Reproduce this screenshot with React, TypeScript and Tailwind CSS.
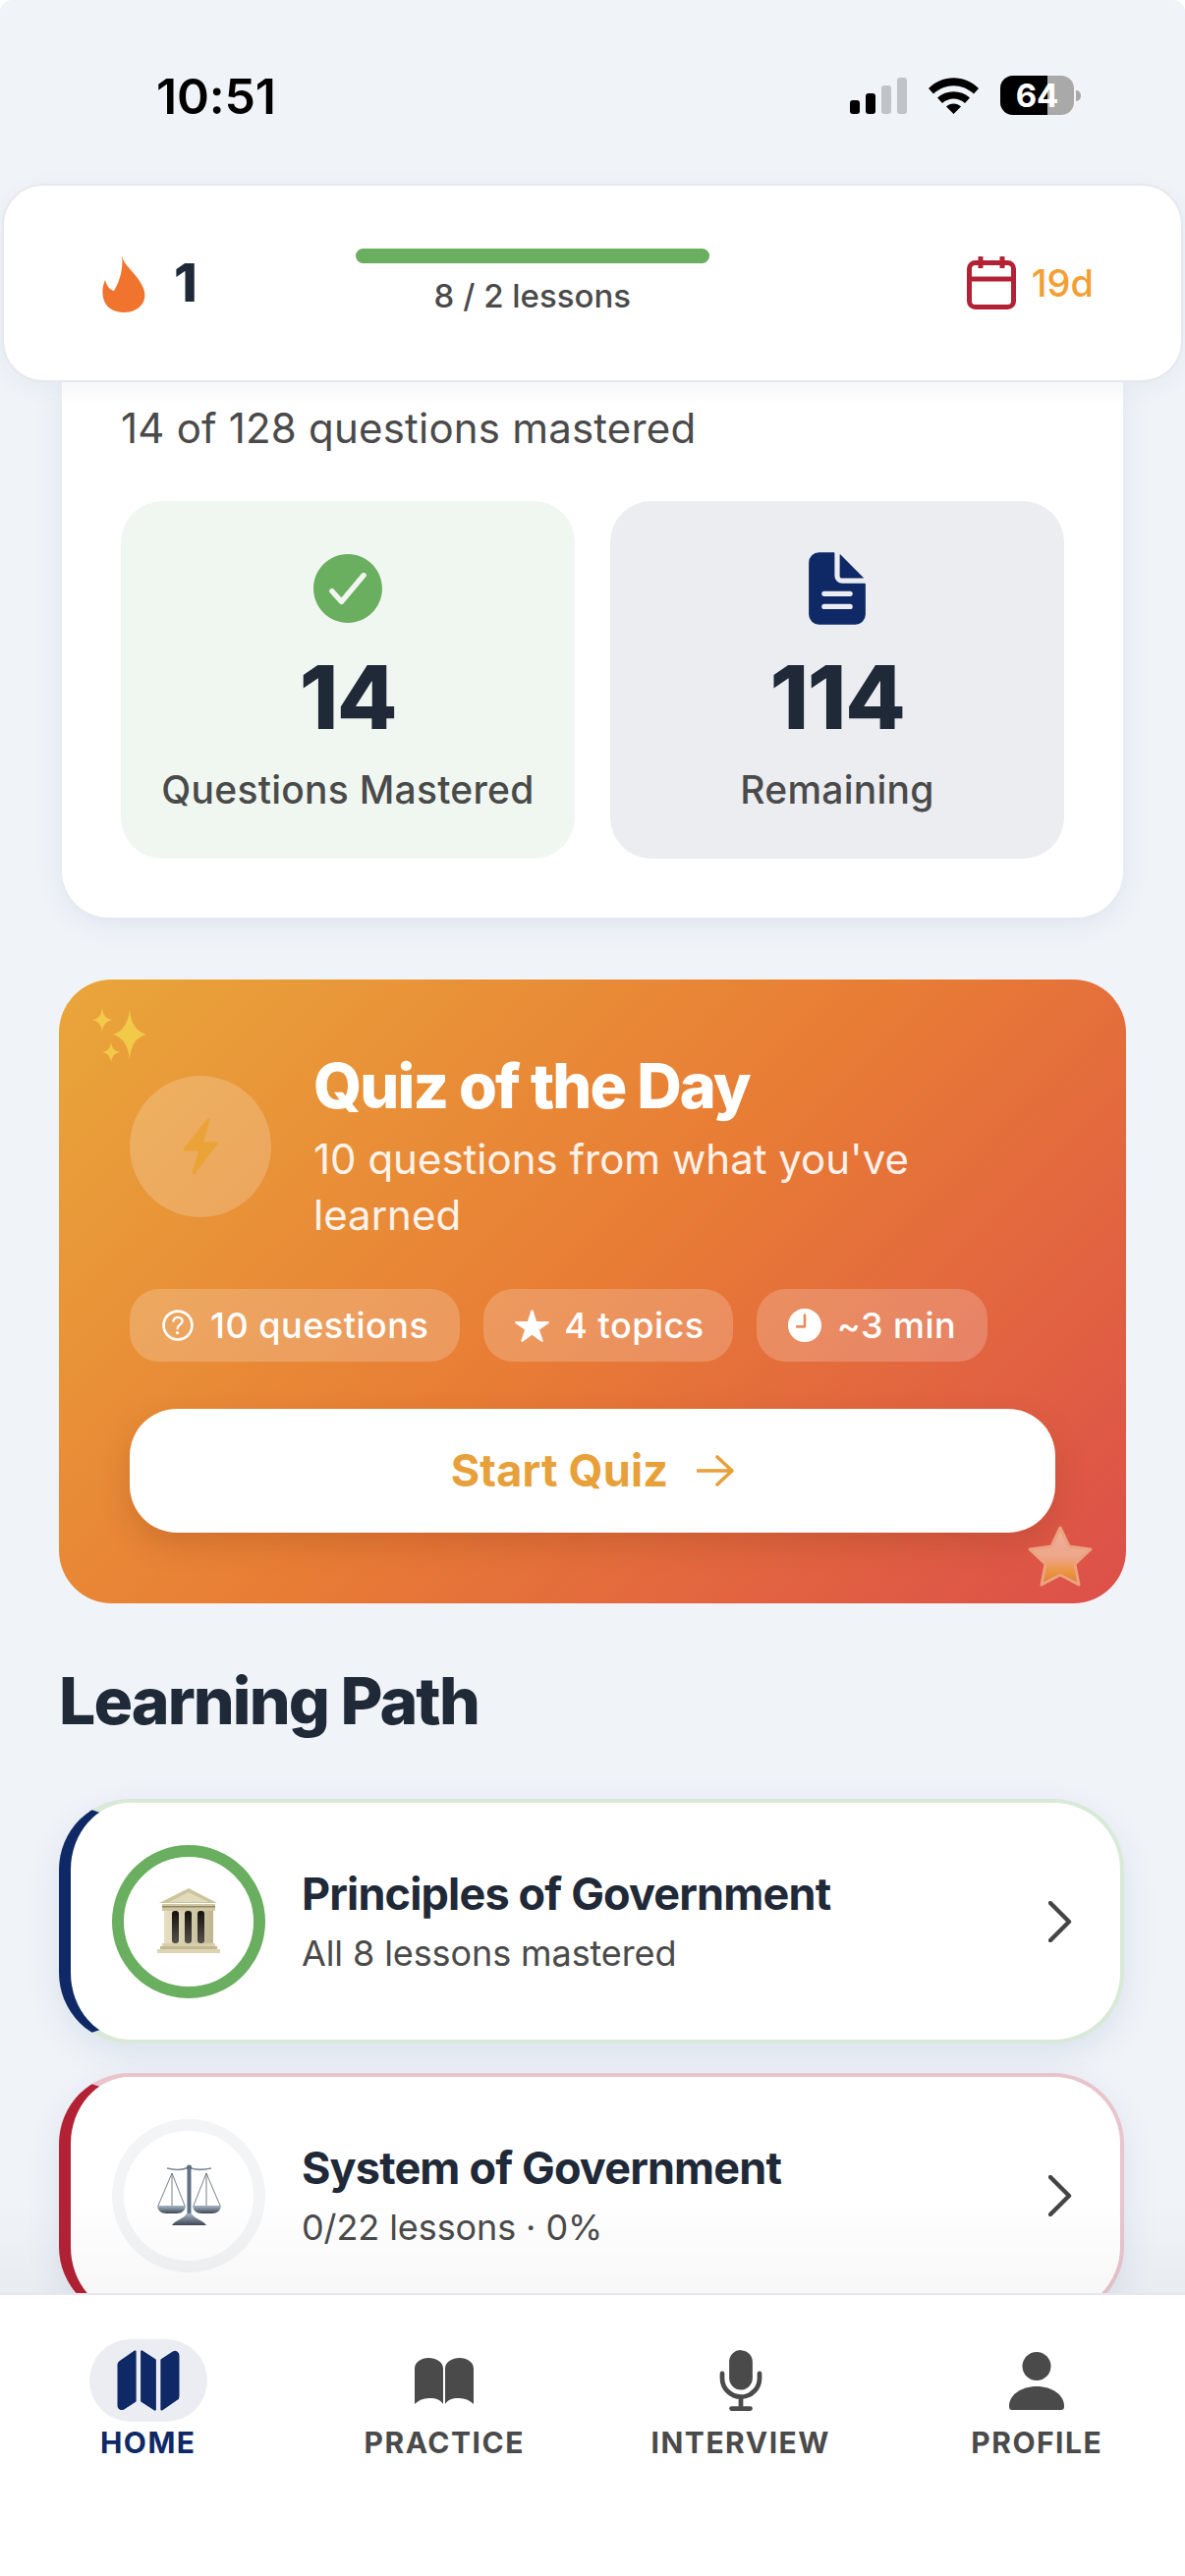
import React from "react";
import { IoCheckmarkCircle, IoDocumentText, IoHelpCircleOutline, IoStar, IoTime, IoMap, IoMic } from "react-icons/io5";

function StatusBar() {
  return (
    <div className="relative flex h-[187px] shrink-0 items-start justify-between pl-[159px] pr-[106px] pt-[68px]">
      <span className="text-[50px] font-semibold leading-[60px] tracking-[-0.2px] text-black">10:51</span>
      <div className="flex items-center pt-[9px]">
        <div className="flex h-[37px] items-end gap-[6px]">
          <div className="h-[14px] w-[10px] rounded-[3px] bg-black" />
          <div className="h-[21px] w-[10px] rounded-[3px] bg-black" />
          <div className="h-[29px] w-[10px] rounded-[3px] bg-[#c0c4c8]" />
          <div className="h-[37px] w-[10px] rounded-[3px] bg-[#c0c4c8]" />
        </div>
        <svg className="ml-[22px]" width="51" height="37" viewBox="0 0 51 37">
          <path d="M0 11 C14 -3.5 37 -3.5 51 11 L46 16.5 C34 5.5 17 5.5 5 16.5 Z" fill="#000" />
          <path d="M9 20.5 C18 12 33 12 42 20.5 L37 26 C30.5 20 20.5 20 14 26 Z" fill="#000" />
          <path d="M18 29.5 C22 25.5 29 25.5 33 29.5 L25.5 37 Z" fill="#000" />
        </svg>
        <div className="relative ml-[22px] flex h-[40px] w-[75px] items-center justify-center overflow-hidden rounded-[13px] bg-[#a9a9a9]">
          <div className="absolute inset-y-0 left-0 w-[48px] bg-black" />
          <span className="relative text-[33px] font-bold leading-[38px] text-white">64</span>
        </div>
        <div className="ml-[2px] h-[11px] w-[5px] rounded-r-full bg-[#a9a9a9]" />
      </div>
    </div>
  );
}

function TopCard() {
  return (
    <div className="relative z-10 mx-[2px] flex h-[202px] shrink-0 items-center rounded-[42px] border-2 border-[#e6e8ee] bg-white pl-[100px] shadow-[0_6px_24px_rgba(15,41,102,0.05)]">
      <svg className="mt-[2px]" width="44" height="58" viewBox="0 0 44 58">
        <path d="M20 0 C22 10 32 16 38 26 C44 35 45 42 41 49 C37 55 30 58 22 58 C12 58 3 53 1 43 C0 37 0 32 3 25 C5 32 8 35 12 36 C17 28 22 14 20 0 Z" fill="#f0742e" />
      </svg>
      <span className="ml-[29px] text-[54px] font-extrabold leading-[60px] text-[#1f2937]">1</span>
      <div className="ml-[161px] flex w-[360px] flex-col items-center">
        <div className="h-[15px] w-full rounded-full bg-[#6aae5f]" />
        <span className="mt-[11px] text-[33px] font-medium leading-[44px] text-[#4a4a4a]">8 / 2 lessons</span>
      </div>
      <svg className="ml-[262px]" width="50" height="54" viewBox="0 0 50 54">
        <rect x="2.5" y="6.5" width="45" height="45" rx="6" fill="none" stroke="#b22234" strokeWidth="5" />
        <path d="M2.5 23 H47.5 M14 0 V12 M36 0 V12" fill="none" stroke="#b22234" strokeWidth="5" />
      </svg>
      <span className="ml-[16px] text-[38px] font-medium leading-[44px] text-[#f2a033]">19d</span>
    </div>
  );
}

function Tile({ icon, value, label, bg }: { icon: React.ReactNode; value: string; label: string; bg: string }) {
  return (
    <div className={`flex h-[364px] flex-col items-center rounded-[42px] pt-[47px] ${bg}`}>
      <div className="flex h-[84px] items-center justify-center">{icon}</div>
      <div className="mt-[19px] text-[90px] font-extrabold leading-[100px] tracking-[-1.5px] text-[#1f2937]">{value}</div>
      <div className="mt-[19px] text-[39px] font-medium leading-[50px] tracking-[0.25px] text-[#4a4a4a]">{label}</div>
    </div>
  );
}

function ProgressCard() {
  return (
    <div className="mx-[3px] rounded-b-[48px] bg-white px-[60px] pb-[60px] pt-[17px] shadow-[0_6px_30px_rgba(15,41,102,0.08)]">
      <div className="text-[42px] font-normal leading-[60px] tracking-[0.2px] text-[#4a4a4a]">14 of 128 questions mastered</div>
      <div className="mt-[44px] grid grid-cols-2 gap-[36px]">
        <Tile bg="bg-[#f0f7f0]" value="14" label="Questions Mastered" icon={<IoCheckmarkCircle className="text-[#6aae5f]" style={{ width: 86, height: 86 }} />} />
        <Tile bg="bg-[#ebedf1]" value="114" label="Remaining" icon={<IoDocumentText className="text-[#0f2966]" style={{ width: 84, height: 84 }} />} />
      </div>
    </div>
  );
}

function Chip({ icon, text, tight }: { icon: React.ReactNode; text: string; tight?: boolean }) {
  return (
    <div className={`flex h-[74px] items-center gap-[12px] rounded-[30px] bg-white/20 pl-[28px] ${tight ? "pr-[29px]" : "pr-[32px]"}`}>
      <div className="flex h-[42px] w-[42px] items-center justify-center">{icon}</div>
      <span className="text-[36px] font-medium leading-[44px] tracking-[0.5px] text-white">{text}</span>
    </div>
  );
}

function QuizCard() {
  return (
    <div className="relative mt-[63px] rounded-[54px] bg-[linear-gradient(135deg,#e9a63a_0%,#e87c35_50%,#dc4f4a_100%)] p-[72px]">
      <svg className="absolute left-[30px] top-[20px]" width="80" height="70" viewBox="0 0 80 70">
        <g fill="#f3c94a">
          <path d="M42 10 Q43 31 59 36 Q43 40 42 62 Q40 40 25 36 Q40 31 42 10 Z" />
          <path d="M14 9 Q15 20 24 21 Q15 23 14 33 Q13 23 4 21 Q13 20 14 9 Z" />
          <path d="M23 44 Q24 53 32 54 Q24 55 23 64 Q22 55 14 54 Q22 53 23 44 Z" />
        </g>
      </svg>
      <div className="flex items-center gap-[43px]">
        <div className="flex h-[144px] w-[144px] shrink-0 items-center justify-center rounded-full bg-white/20">
          <svg width="36" height="58" viewBox="0 0 36 58">
            <path d="M26 2 L2 32 H18 L11 56 L34 26 H19 Z" fill="#eba338" stroke="#eba338" strokeWidth="3" strokeLinejoin="round" />
          </svg>
        </div>
        <div className="min-w-0">
          <div className="text-[63px] font-extrabold leading-[72px] tracking-[-1.9px] text-white">Quiz of the Day</div>
          <div className="mt-[10px] text-[42px] font-normal leading-[57px] text-white/90">10 questions from what you've<br />learned</div>
        </div>
      </div>
      <div className="mt-[47px] flex gap-[24px]">
        <Chip text="10 questions" icon={<IoHelpCircleOutline className="text-white" style={{ width: 42, height: 42 }} />} />
        <Chip tight text="4 topics" icon={<IoStar className="text-white" style={{ width: 37, height: 37 }} />} />
        <Chip text="~3 min" icon={<IoTime className="-scale-x-100 text-white" style={{ width: 42, height: 42 }} />} />
      </div>
      <div className="mt-[48px] flex h-[126px] items-center justify-center gap-[29px] rounded-[48px] bg-white shadow-[0_12px_30px_rgba(120,50,20,0.22)]">
        <span className="text-[45px] font-bold leading-[56px] tracking-[0.2px] text-[#e8a03a]">Start Quiz</span>
        <svg width="38" height="32" viewBox="0 0 38 32">
          <path d="M1 16 H36 M21 2 L36 16 L21 30" fill="none" stroke="#e8a03a" strokeWidth="3.6" strokeLinecap="round" strokeLinejoin="round" />
        </svg>
      </div>
      <svg className="absolute bottom-[16px] right-[33px]" width="68" height="64" viewBox="0 0 68 64">
        <defs>
          <linearGradient id="starFill" x1="0" y1="0" x2="0" y2="1">
            <stop offset="0%" stopColor="#eeb09c" />
            <stop offset="50%" stopColor="#eda78c" />
            <stop offset="78%" stopColor="#ec9440" />
            <stop offset="100%" stopColor="#e07c3a" />
          </linearGradient>
        </defs>
        <path d="M34 3 L43 22 L65 25 L49 40 L53 61 L34 51 L15 61 L19 40 L3 25 L25 22 Z" fill="url(#starFill)" stroke="#eba27e" strokeWidth="3" strokeLinejoin="round" />
      </svg>
    </div>
  );
}

function Temple() {
  return (
    <svg width="64" height="67" viewBox="0 0 64 67">
      <defs>
        <linearGradient id="stone" x1="0" y1="0" x2="1" y2="0">
          <stop offset="0%" stopColor="#e8e0c2" />
          <stop offset="100%" stopColor="#bfb591" />
        </linearGradient>
        <linearGradient id="dark" x1="0" y1="0" x2="0" y2="1">
          <stop offset="0%" stopColor="#14110d" />
          <stop offset="100%" stopColor="#55504a" />
        </linearGradient>
      </defs>
      <path d="M32 0 L61 15 H2 Z" fill="#cdc39c" />
      <path d="M32 4 L52 14 H12 Z" fill="#e2dabb" />
      <rect x="5" y="16" width="54" height="7" fill="#cfc6a2" />
      <rect x="5" y="18" width="54" height="1.5" fill="#8f8768" />
      <rect x="7" y="23" width="50" height="34" fill="url(#stone)" />
      <rect x="15" y="23" width="7" height="33" rx="3" fill="url(#dark)" />
      <rect x="28" y="23" width="7" height="33" rx="3" fill="url(#dark)" />
      <rect x="41" y="23" width="7" height="33" rx="3" fill="url(#dark)" />
      <rect x="5" y="56" width="54" height="3" fill="#d9d0ad" />
      <rect x="3" y="59" width="58" height="3" fill="#c3b990" />
      <rect x="0" y="62" width="64" height="4" fill="#dcd4b4" />
    </svg>
  );
}

function Scales() {
  return (
    <svg width="65" height="64" viewBox="0 0 65 64">
      <defs>
        <linearGradient id="steel" x1="0" y1="0" x2="0" y2="1">
          <stop offset="0%" stopColor="#a9b8c9" />
          <stop offset="100%" stopColor="#3d4754" />
        </linearGradient>
      </defs>
      <path d="M10 4 C18 6 26 6 32 3 C38 6 46 6 55 4" fill="none" stroke="#7d8a99" strokeWidth="1.6" />
      <circle cx="32.5" cy="3" r="2.6" fill="#5f6f82" />
      <rect x="30.5" y="4" width="4" height="50" fill="#5f7186" />
      <path d="M15 9 L1 42 M15 9 L28 42 M15 9 V42 M50 9 L37 42 M50 9 L64 42 M50 9 V42" fill="none" stroke="#68727e" strokeWidth="0.9" />
      <path d="M0 42 H29 C28 51 20 50 14.5 50 C9 50 1 51 0 42 Z" fill="url(#steel)" />
      <path d="M36 42 H65 C64 51 56 50 50.5 50 C45 50 37 51 36 42 Z" fill="url(#steel)" />
      <path d="M15 62 C19 56 27 56 30 50 H35 C38 56 46 56 50 62 Z" fill="url(#steel)" />
    </svg>
  );
}

function PathRow({ icon, title, sub, ring, border, accent }: { icon: React.ReactNode; title: string; sub: string; ring: string; border: string; accent: string }) {
  return (
    <div className={`mr-[2px] flex h-[249px] shrink-0 items-center rounded-[72px] border-[4.5px] border-l-[12px] bg-white pl-[42px] pr-[49px] shadow-[0_12px_36px_rgba(15,41,102,0.09)] ${border} ${accent}`}>
      <div className={`flex h-[156px] w-[156px] shrink-0 items-center justify-center rounded-full border-[12px] bg-white ${ring}`}>{icon}</div>
      <div className="ml-[37px] flex-1">
        <div className="mt-[-2px] text-[45px] font-bold leading-[60px] tracking-[-0.85px] text-[#1f2937]">{title}</div>
        <div className="mt-[6px] text-[36px] font-normal leading-[48px] tracking-[-0.1px] text-[#4a4a4a]">{sub}</div>
      </div>
      <svg width="24" height="42" viewBox="0 0 24 42">
        <path d="M2 2 L21 21 L2 40" fill="none" stroke="#444444" strokeWidth="4.4" strokeLinecap="round" strokeLinejoin="round" />
      </svg>
    </div>
  );
}

function NavItem({ icon, label, active }: { icon: React.ReactNode; label: string; active?: boolean }) {
  return (
    <div className="flex flex-col items-center">
      <div className={`flex h-[84px] w-[120px] items-center justify-center rounded-full ${active ? "bg-[#ebedf2]" : ""}`}>{icon}</div>
      <span className={`mt-[3px] text-[30px] font-bold leading-[36px] tracking-[1.5px] ${active ? "text-[#0f2966]" : "text-[#4a4a4a]"}`}>{label}</span>
    </div>
  );
}

function BottomNav() {
  return (
    <div className="relative z-10 grid h-[288px] shrink-0 grid-cols-4 border-t-[2px] border-[#e6e7ee] bg-white pt-[45px]">
      <NavItem active label="HOME" icon={<IoMap className="text-[#0f2966]" style={{ width: 72, height: 72 }} />} />
      <NavItem
        label="PRACTICE"
        icon={
          <svg width="60" height="47" viewBox="0 0 60 47">
            <path d="M0 11 C0 4 7 0 14 0 C22 0 29 4 29 11 V47 C25 41 19 41 14.5 41 C9 41 4 43 0 47 Z" fill="#4a4a4a" />
            <path d="M31 11 C31 4 38 0 46 0 C53 0 60 4 60 11 V47 C56 43 51 41 45.5 41 C41 41 35 41 31 47 Z" fill="#4a4a4a" />
          </svg>
        }
      />
      <NavItem label="INTERVIEW" icon={<IoMic className="text-[#4a4a4a]" style={{ width: 76, height: 76 }} />} />
      <NavItem
        label="PROFILE"
        icon={
          <svg width="56" height="59" viewBox="0 0 56 59">
            <circle cx="28" cy="14.5" r="14.5" fill="#4a4a4a" />
            <path d="M0 55 C0 44 12 35 28 35 C44 35 56 44 56 55 C56 58 55 59 53 59 H3 C1 59 0 58 0 55 Z" fill="#4a4a4a" />
          </svg>
        }
      />
    </div>
  );
}

export default function App() {
  return (
    <div className="flex h-[2622px] w-[1206px] flex-col overflow-hidden rounded-t-[12px] bg-[#f0f4f9] [font-family:Inter,sans-serif]">
      <StatusBar />
      <TopCard />
      <div className="relative min-h-0 flex-1 overflow-hidden px-[60px]">
        <ProgressCard />
        <QuizCard />
        <div className="mt-[59px] text-[66px] font-extrabold leading-[80px] tracking-[-1.9px] text-[#1f2937]">Learning Path</div>
        <div className="mt-[60px] flex flex-col gap-[30px]">
          <PathRow icon={<Temple />} title="Principles of Government" sub="All 8 lessons mastered" ring="border-[#6aae5f]" border="border-[#d8e9d8]" accent="border-l-[#0f2966]" />
          <PathRow icon={<Scales />} title="System of Government" sub="0/22 lessons · 0%" ring="border-[#f3f4f6]" border="border-[#e8c4cb]" accent="border-l-[#b22234]" />
        </div>
        <div className="pointer-events-none absolute inset-x-0 bottom-0 h-[96px] bg-[linear-gradient(to_bottom,rgba(0,0,0,0),rgba(0,0,0,0.03))]" />
      </div>
      <BottomNav />
    </div>
  );
}
